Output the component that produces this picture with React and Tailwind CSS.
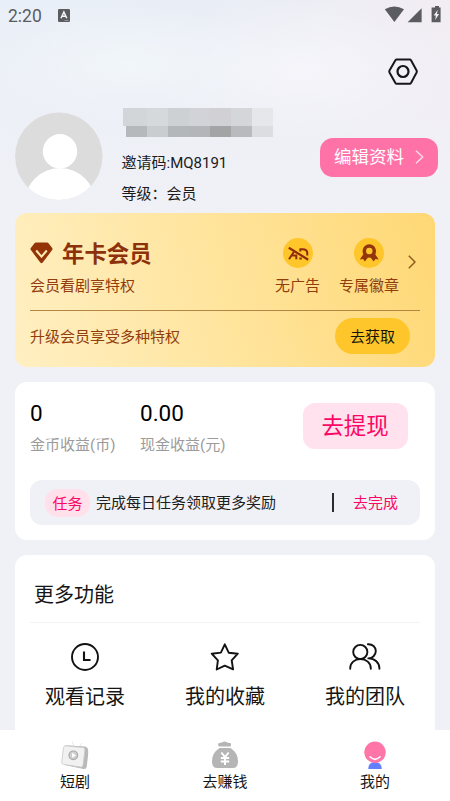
import React from "react";

const MOSAIC_TOP = ["bg-[#d3d6d9]", "bg-[#d5d9db]", "bg-[#cdd1d4]", "bg-[#d2d3d8]", "bg-[#d0d0d5]", "bg-[#d5d6d9]", "bg-[#e6e7eb]"];
const MOSAIC_BOTTOM = ["bg-[#b5b9bc]", "bg-[#c9cdd0]", "bg-[#b3b7ba]", "bg-[#b4b5b8]", "bg-[#a3a4a6]", "bg-[#b9babe]", "bg-[#dcdde1]"];

function StatusBar() {
  return (
    <div className="flex h-8 items-center pl-2 pr-[9px] text-[#5b5c60]">
      <span className="w-[50px] text-[17.5px] leading-8">2:20</span>
      <svg className="-mt-0.5 h-[13px] w-3" viewBox="0 0 12 13">
        <rect width="12" height="13" rx="1.2" fill="#5b5c60" />
        <path d="M3 9.2 5.9 3 8.8 9.2M4 7.2h3.8" fill="none" stroke="#f4f6fa" strokeWidth="1.5" />
        <path d="M6.5 11.5h4" stroke="#a9abb0" strokeWidth=".7" />
      </svg>
      <svg className="-mt-1 ml-auto h-[18px] w-[57px]" viewBox="0 0 57 18" fill="#5b5c60">
        <path d="M.8 4.2Q10.3-1 20 4.2L10.4 17Z" />
        <path d="M37.6 3.2V17.200H23.6Z" />
        <path d="M49 2.500h2V1h4v1.500h1.600V17.200H47.600V2.500Z" />
        <path d="M53.800 4.700 49.700 10.600h2.200l-.8 4.500 4-6.100h-2.200Z" fill="#f4f1f6" />
      </svg>
    </div>
  );
}

function Profile() {
  return (
    <div className="flex h-[105px] pl-[15px] pr-3">
      <svg className="mt-1 h-[88px] w-[88px] shrink-0" viewBox="0 0 88 88">
        <defs>
          <clipPath id="avatar"><circle cx="43.8" cy="44.3" r="43.7" /></clipPath>
        </defs>
        <g clipPath="url(#avatar)">
          <rect width="88" height="88" fill="#dcdcdc" />
          <circle cx="45" cy="39.3" r="17.2" fill="#fff" />
          <circle cx="45" cy="91.5" r="35.5" fill="#fff" />
        </g>
      </svg>
      <div className="ml-[18.5px] flex w-[198.5px] flex-col text-[15px] text-[#1b1b1d]">
        <div className="ml-[1.5px] flex h-[18px]">
          {MOSAIC_TOP.map((c, i) => (
            <span key={i} className={`${c} ${i ? "w-[21px]" : "w-6"}`} />
          ))}
        </div>
        <div className="ml-[4.5px] flex h-[11px]">
          {MOSAIC_BOTTOM.map((c, i) => (
            <span key={i} className={`${c} w-[21px]`} />
          ))}
        </div>
        <span className="mt-[15px] h-[22px] leading-[22px]">邀请码:MQ8191</span>
        <span className="mt-[9px] h-[22px] leading-[22px]">等级：会员</span>
      </div>
      <button className="mt-[29.5px] flex h-[39px] w-[118px] shrink-0 items-center rounded-[13px] bg-[#ff72a8] pl-[14px] pt-px text-[17.5px] text-white">
        编辑资料
        <svg className="-mt-px ml-[11px] h-[14px] w-[9px]" viewBox="0 0 9 14" fill="none" stroke="#f5dbe6" strokeWidth="1.5">
          <path d="M1 .8 7.700 7 1 13.200" />
        </svg>
      </button>
    </div>
  );
}

function Perk({ label, children }) {
  return (
    <div className="flex flex-col items-center">
      <svg className="h-[30px] w-[30px]" viewBox="0 0 30 30">
        <circle cx="15" cy="15" r="15" fill="#ffc62b" />
        {children}
      </svg>
      <span className="mt-[7px] leading-[22px]">{label}</span>
    </div>
  );
}

function VipCard() {
  return (
    <section className="mx-[15px] flex h-[154px] flex-col rounded-xl bg-[linear-gradient(75deg,#ffefc2_0%,#ffe49c_50%,#ffd875_100%)] px-[15px] text-[15px] text-[#913d0d]">
      <div className="flex h-[98px] border-b border-[#b48642] pt-[25px]">
        <div className="flex w-[245px] flex-col">
          <div className="flex h-[30px] items-center gap-[9px]">
            <svg className="h-[22px] w-[23px]" viewBox="0 0 23 22">
              <path d="M6 .5h11q1 0 1.7.9l3.5 4.7q.7 1-.1 2L12.7 20.6q-1.200 1.300-2.400 0L.9 8.100q-.8-1-.1-2L4.300 1.400Q5 .5 6 .5Z" fill="#933306" />
              <path d="m6.200 8.500 5.300 6.200 5.300-6.200" fill="none" stroke="#ffebb5" strokeWidth="2" />
            </svg>
            <h1 className="pt-0.5 text-[22.4px] font-bold leading-[30px] text-[#8c310a]">年卡会员</h1>
          </div>
          <span className="mt-[7px] leading-[22px]">会员看剧享特权</span>
        </div>
        <div className="flex gap-[19px]">
          <Perk label="无广告">
            <g fill="none" stroke="#902c0c" strokeWidth="2">
              <path d="m6 21.200 5-7.500M8.500 17.500H14M13.300 16.500v4.700M16.500 11.200h3q4.800 0 4.800 4v2.300M17.300 11v2.500M16.300 20.500h2.500" />
              <path d="m5.800 9.700 19.400 12" strokeWidth="2.200" />
            </g>
          </Perk>
          <Perk label="专属徽章">
            <path d="m9.500 16-3.700 5.500 3.200-.4 1.900 2.400 3.400-4.500M21 16l3.700 5.500-3.200-.4-1.900 2.400-3.400-4.500" fill="#93360d" />
            <circle cx="15.300" cy="13" r="5" fill="#ffc62b" stroke="#93360d" strokeWidth="3.600" />
          </Perk>
        </div>
        <svg className="ml-[9px] mt-[17px] h-[14px] w-2" viewBox="0 0 8 14" fill="none" stroke="#925b1c" strokeWidth="1.5">
          <path d="M.8.8 7 7 .8 13.2" />
        </svg>
      </div>
      <div className="flex items-start justify-between pr-[10px] pt-[7px]">
        <span className="mt-2 leading-[22px]">升级会员享受多种特权</span>
        <button className="h-9 w-[75px] rounded-full bg-[#ffc62b] pt-0.5 text-[#17150a]">去获取</button>
      </div>
    </section>
  );
}

function EarningsCard() {
  return (
    <section className="mx-[15px] mt-[15px] h-[158px] rounded-xl bg-white px-[15px] text-[15px]">
      <div className="flex h-[98px] pt-[17px]">
        <div className="flex w-[110px] flex-col">
          <span className="text-[22.5px] leading-7 text-black">0</span>
          <span className="mt-[7px] leading-[22px] text-[#9b9b9b]">金币收益(币)</span>
        </div>
        <div className="flex flex-col">
          <span className="text-[22.5px] leading-7 text-black">0.00</span>
          <span className="mt-[7px] leading-[22px] text-[#9b9b9b]">现金收益(元)</span>
        </div>
        <button className="ml-auto mr-[12.5px] mt-1 h-[46px] w-[105px] rounded-xl bg-[#ffe2ed] pt-px text-[22.4px] leading-[45px] text-[#fb0866]">去提现</button>
      </div>
      <div className="flex h-[45px] items-center rounded-xl bg-[#f0f1f6] pl-[15px] pr-[22px]">
        <span className="h-7 w-[45px] rounded-[13px] bg-[#ffe0eb] pt-px text-center leading-7 text-[#fb0866]">任务</span>
        <span className="ml-1.5 pt-0.5 text-[#1e1e20]">完成每日任务领取更多奖励</span>
        <span className="ml-auto h-[19px] w-[1.5px] bg-[#2b2b2d]" />
        <span className="ml-[19px] pt-0.5 text-[#fb0866]">去完成</span>
      </div>
    </section>
  );
}

function Feature({ label, children }) {
  return (
    <div className="flex flex-1 flex-col items-center">
      <svg className="h-8 w-8" viewBox="0 0 32 32" fill="none" stroke="#121212" strokeWidth="1.9" strokeLinejoin="round" strokeLinecap="round">
        {children}
      </svg>
      <span className="mt-[9px] text-[20px] leading-[30px] text-[#151515]">{label}</span>
    </div>
  );
}

function MoreCard() {
  return (
    <section className="mx-[15px] mt-[15px] h-[175px] rounded-t-xl bg-white">
      <h2 className="mx-[15px] h-[68px] border-b border-[#f3f3f5] pl-[4px] pt-[25px] text-[20px] font-normal leading-[30px] text-[#151515]">更多功能</h2>
      <div className="flex pt-[18px]">
        <Feature label="观看记录">
          <circle cx="16" cy="16" r="13" />
          <path d="M15 10.500v8.500h6.500" strokeLinecap="butt" strokeLinejoin="miter" strokeWidth="2.100" />
        </Feature>
        <Feature label="我的收藏">
          <path d="m15.800 3.300 3.900 8.400 9.100 1-6.100 6.700 1.400 9-8.300-3.800-8.100 3.900 1.200-9.100L2.700 12.700l9.200-1.100Z" />
        </Feature>
        <Feature label="我的团队">
          <circle cx="11.300" cy="11" r="7.100" />
          <path d="M1.200 27.800v-.6c0-5.200 4.500-9.200 10.200-9.200s10.400 4 10.400 9.200v.6M18.900 3.200c4.600-.3 7.900 3 7.900 6.900 0 4-3.300 7.300-7.500 7.300 6.600-.2 11.100 4.400 11.100 9.800v.6" />
        </Feature>
      </div>
    </section>
  );
}

function Tab({ label, children }) {
  return (
    <div className="flex flex-1 flex-col items-center pt-2.5">
      <svg className="h-[30px] w-[30px]" viewBox="0 0 30 30">{children}</svg>
      <span className="mt-px leading-[22px] text-[#161616]">{label}</span>
    </div>
  );
}

function TabBar() {
  return (
    <nav className="flex h-[71px] bg-white text-[15px]">
      <Tab label="短剧">
        <path d="m14 6-2-4.500M20 6l2-3" stroke="#e0e0e0" strokeWidth=".8" />
        <path d="m5.500 5.200 18.800 1.400q3.300.4 3.700 2.800.4 2.700-.1 7.300l-1.200 10q-.4 2.600-3.100 2.300L4.500 25Z" fill="#b9b9b9" />
        <path d="m5.600 5.800 17.200 1.700q2.300.2 2.100 2.400l-1.800 15.200q-.3 2.400-2.600 2L3.700 24.400q-2.300-.4-2-2.600L3.500 7.700q.3-2.100 2.100-1.900Z" fill="#f1f1f1" stroke="#c8c8c8" strokeWidth=".8" />
        <circle cx="13.300" cy="15.300" r="4.300" fill="#cfcfcf" stroke="#a9a9a9" strokeWidth="1.200" />
        <path d="m12 12.800 4 2.600-4 2.300Z" fill="#fff" />
      </Tab>
      <Tab label="去赚钱">
        <path d="M9.500 3q1.500 0 2.800-.8 2.200-1.200 4.500 0 1.300.8 2.700.8 2.300-.2 1.500 2l-.5 1.500H9L8 4.800Q7.500 3 9.500 3Z" fill="#b5b5b5" />
        <path d="M9.500 8h11q7.500 5 7.500 13 0 7-5 7H7q-5 0-5-7Q2 13 9.500 8Z" fill="#b5b5b5" />
        <path d="m11.300 12.500 3.700 4.700 3.700-4.700M10.800 18h8.400M10.800 21.500h8.400M15 17v8" fill="none" stroke="#fff" strokeWidth="2" />
      </Tab>
      <Tab label="我的">
        <path d="M8.200 29q.3-7 6.800-7t6.800 7Z" fill="#617fff" />
        <circle cx="15" cy="12.300" r="10.700" fill="#ff75a7" />
        <path d="M10 16.800q5 5 10 0" fill="none" stroke="#fff" strokeWidth="1.600" strokeLinecap="round" />
      </Tab>
    </nav>
  );
}

export default function App() {
  return (
    <main className="h-[801px] w-[450px] overflow-hidden bg-[#f0f1f6] font-[Roboto,'Noto_Sans_CJK_SC',sans-serif]">
      <div className="h-[213px] bg-[radial-gradient(ellipse_150px_60px_at_130px_65px,#f1f6fa_0%,transparent_100%),radial-gradient(ellipse_150px_70px_at_300px_70px,#f5f5fa_0%,transparent_100%),linear-gradient(180deg,transparent_0%,#f0f1f6_100%),linear-gradient(90deg,#e9eff8_0%,#e9eef6_45%,#f2edf3_100%)]">
        <StatusBar />
        <div className="flex h-[76px] items-start justify-end pr-[31px] pt-[25px]">
          <svg className="h-[29px] w-8" viewBox="0 0 32 29" fill="none" stroke="#17171a" strokeWidth="2" strokeLinejoin="round">
            <path d="M9.700 2.500h13q.8 0 1.300.8L29.600 13.500q.5 1 0 2L24 26q-.5.800-1.300.800h-13q-.8 0-1.300-.8L2.500 15.500q-.5-1 0-2L8.400 3.300q.5-.8 1.300-.8Z" />
            <circle cx="16" cy="14.500" r="5.500" strokeWidth="2.200" />
          </svg>
        </div>
        <Profile />
      </div>
      <VipCard />
      <EarningsCard />
      <MoreCard />
      <TabBar />
    </main>
  );
}
